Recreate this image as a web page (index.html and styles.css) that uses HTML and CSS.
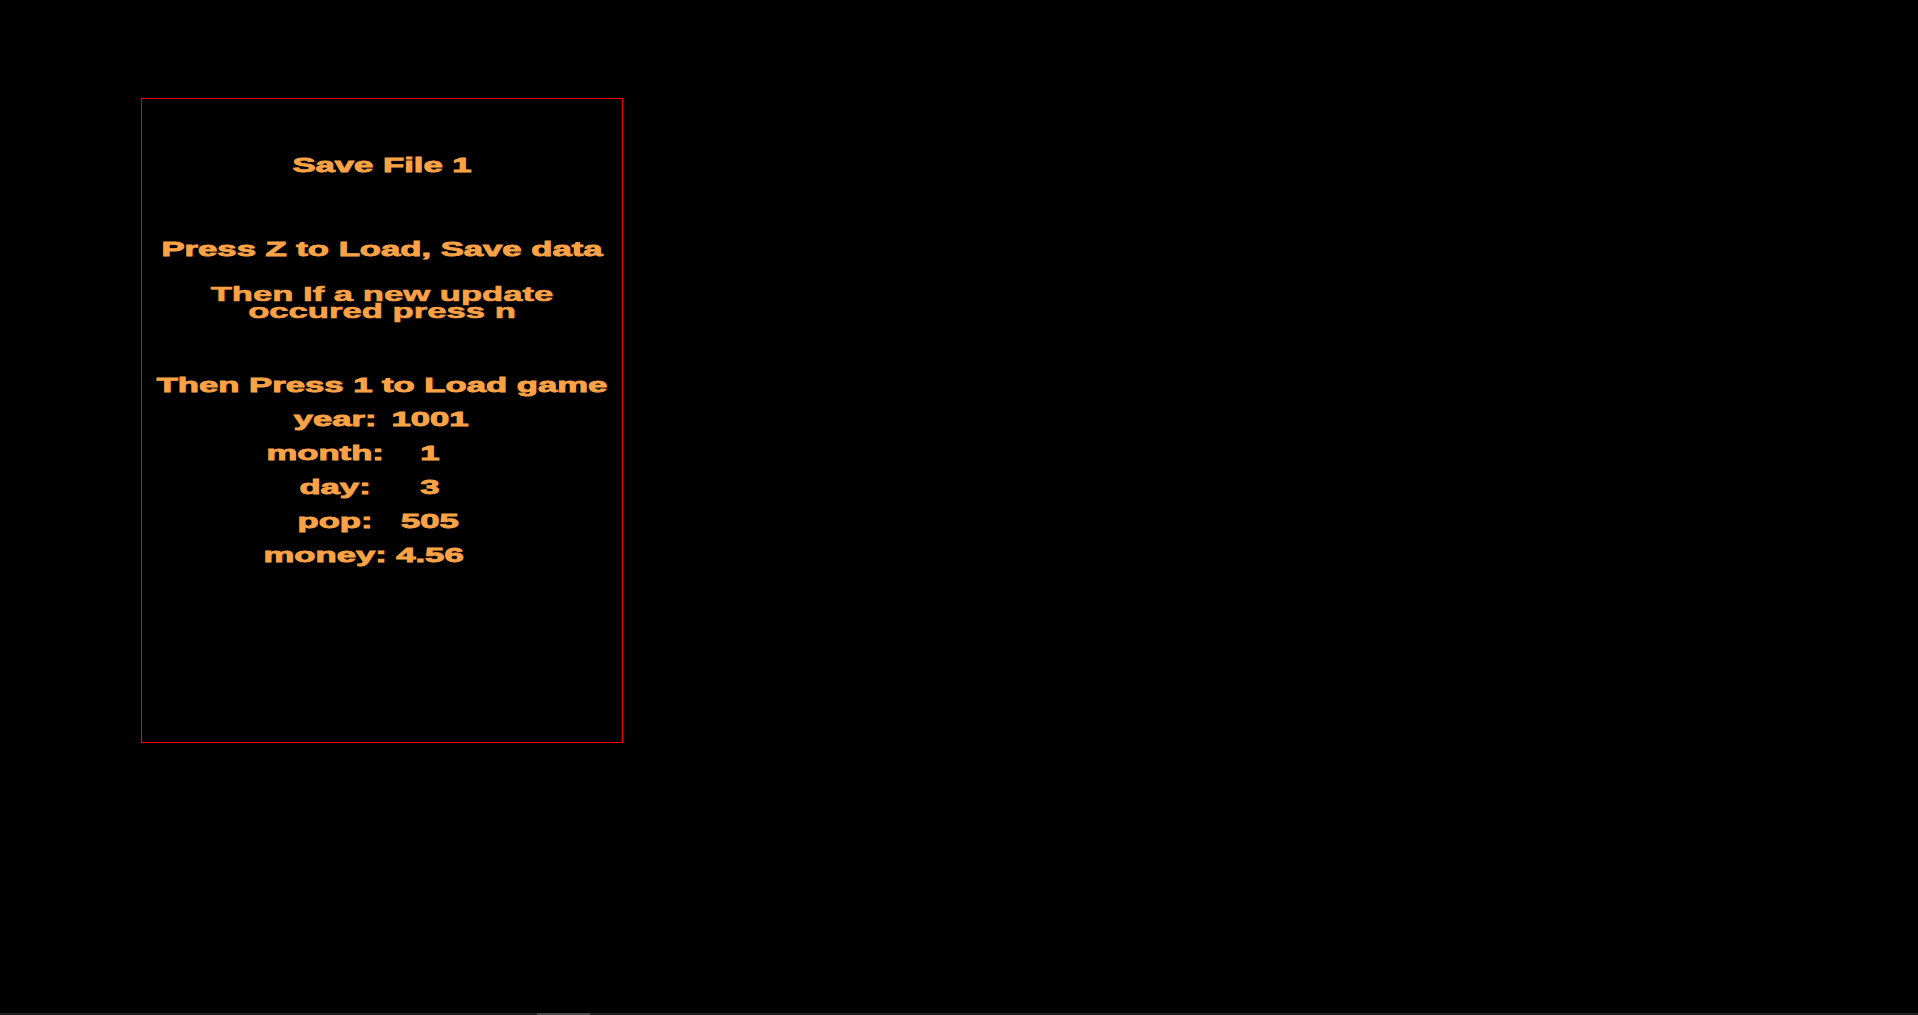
FILE: index.html
```html
<!DOCTYPE html>
<html>
<head>
<meta charset="utf-8">
<link rel="stylesheet" href="styles.css">
</head>
<body>
  <div class="panel">
    <div class="line title">Save File 1</div>
    <div class="line press">Press Z to Load, Save data</div>
    <div class="line update">Then If a new update</div>
    <div class="line update">occured press n</div>
    <div class="list">
      <div class="line">Then Press 1 to Load game</div>
      <div class="line stat"><span class="lbl">year:</span><span class="val">1001</span></div>
      <div class="line stat"><span class="lbl wide">month:</span><span class="val">1</span></div>
      <div class="line stat"><span class="lbl">day:</span><span class="val">3</span></div>
      <div class="line stat"><span class="lbl">pop:</span><span class="val">505</span></div>
      <div class="line stat"><span class="lbl wide">money:</span><span class="val">4.56</span></div>
    </div>
  </div>
  <div class="bar"><div class="thumb"></div></div>
</body>
</html>
```
FILE: styles.css
```css
html, body {
  margin: 0;
  padding: 0;
  background: #000;
}
body {
  height: 1015px;
  display: flex;
  flex-direction: column;
  overflow: hidden;
}
.panel {
  flex: none;
  box-sizing: border-box;
  width: 482px;
  height: 645px;
  margin: 98px 0 0 141px;
  border: 1px solid #ff0000;
  display: flex;
  flex-direction: column;
}
.line {
  font-family: "Liberation Sans", Arial, sans-serif;
  font-weight: 700;
  font-size: 21px;
  line-height: 26px;
  color: #f9a246;
  -webkit-text-stroke: 0.9px #f9a246;
  text-align: center;
  white-space: nowrap;
  transform: scaleX(1.65);
  transform-origin: 50% 50%;
}
.title {
  margin-top: 53px;
}
.press {
  margin-top: 58px;
}
.update {
  line-height: 17px;
  height: 17px;
  -webkit-text-stroke: 0.6px #f9a246;
}
.press + .update {
  margin-top: 23px;
}
.list {
  margin-top: 49px;
  display: flex;
  flex-direction: column;
}
.list .line {
  line-height: 34px;
}
.stat {
  width: 115px;
  margin: 0 auto;
  display: grid;
  grid-template-columns: minmax(0, 1fr) minmax(0, 1fr);
}
.lbl, .val {
  display: flex;
  justify-content: center;
  min-width: 0;
}
.lbl.wide {
  padding-right: 12px;
}
.bar {
  margin-top: auto;
  height: 2px;
  background: #1f1f1f;
  display: flex;
}
.thumb {
  margin-left: 537px;
  width: 53px;
  background: #4a4a4a;
}
```
